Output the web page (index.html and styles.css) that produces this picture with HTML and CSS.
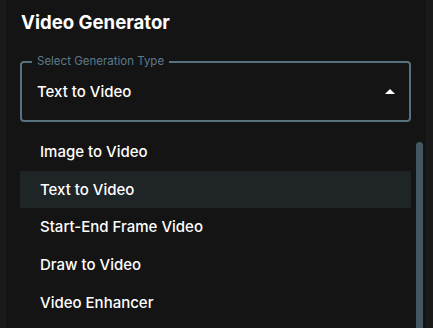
FILE: index.html
```html
<!DOCTYPE html>
<html>
<head>
<meta charset="utf-8">
<link rel="stylesheet" href="styles.css">
</head>
<body>
<div class="frame">
  <div class="edge-left"></div>
  <div class="panel">
    <h1 class="title">Video Generator</h1>
    <div class="select">
      <span class="select-label">Select Generation Type</span>
      <span class="select-value">Text to Video</span>
      <svg class="select-arrow" width="10" height="5" viewBox="0 0 10 5"><path d="M0 5 L5 0 L10 5 Z" fill="#ffffff"/></svg>
    </div>
    <div class="menu">
      <ul class="options">
        <li class="option">Image to Video</li>
        <li class="option option-selected">Text to Video</li>
        <li class="option">Start-End Frame Video</li>
        <li class="option">Draw to Video</li>
        <li class="option">Video Enhancer</li>
      </ul>
      <div class="scrolltrack"><div class="scrollthumb"></div></div>
    </div>
  </div>
  <div class="edge-right"></div>
</div>
</body>
</html>
```

FILE: styles.css
```css
* { box-sizing: border-box; }
html, body {
  margin: 0;
  padding: 0;
  height: 100%;
  overflow: hidden;
  background: #1b1a18;
  font-family: Inter, "Liberation Sans", sans-serif;
  color: #ffffff;
}
.frame {
  display: flex;
  height: 328px;
}
.edge-left {
  width: 6px;
  background: #1b1a18;
}
.edge-right {
  width: 7px;
  background: #1a1a1a;
}
.panel {
  width: 420px;
  background: #141414;
  padding: 10px 0 0 14px;
  display: flex;
  flex-direction: column;
  overflow: hidden;
}
.title {
  margin: 0;
  font-size: 18.6px;
  font-weight: 700;
  line-height: 24px;
  padding-left: 1px;
  flex-shrink: 0;
}
.select {
  position: relative;
  flex-shrink: 0;
  margin-top: 27px;
  width: 391px;
  height: 61px;
  border: 2px solid #56727f;
  border-radius: 4px;
  display: flex;
  align-items: center;
  padding: 0 14px 0 15px;
}
.select-label {
  position: absolute;
  top: -9px;
  left: 10px;
  padding: 0 5px;
  background: #141414;
  color: #5b7b8a;
  font-size: 11.5px;
  line-height: 14px;
}
.select-value {
  flex: 1;
  font-size: 15px;
  font-weight: 500;
}
.select-arrow {
  display: block;
}
.menu {
  display: flex;
  flex-shrink: 0;
  margin-top: 11px;
}
.options {
  list-style: none;
  margin: 0;
  padding: 0;
  width: 391px;
}
.option {
  height: 37.6px;
  display: flex;
  align-items: center;
  padding-left: 20px;
  font-size: 15px;
  font-weight: 500;
}
.option-selected {
  background: #1f2427;
}
.scrolltrack {
  margin-left: 5px;
  padding-top: 9px;
  width: 7px;
}
.scrollthumb {
  width: 7px;
  height: 200px;
  background: #435762;
  border-radius: 4px 4px 0 0;
}
```
